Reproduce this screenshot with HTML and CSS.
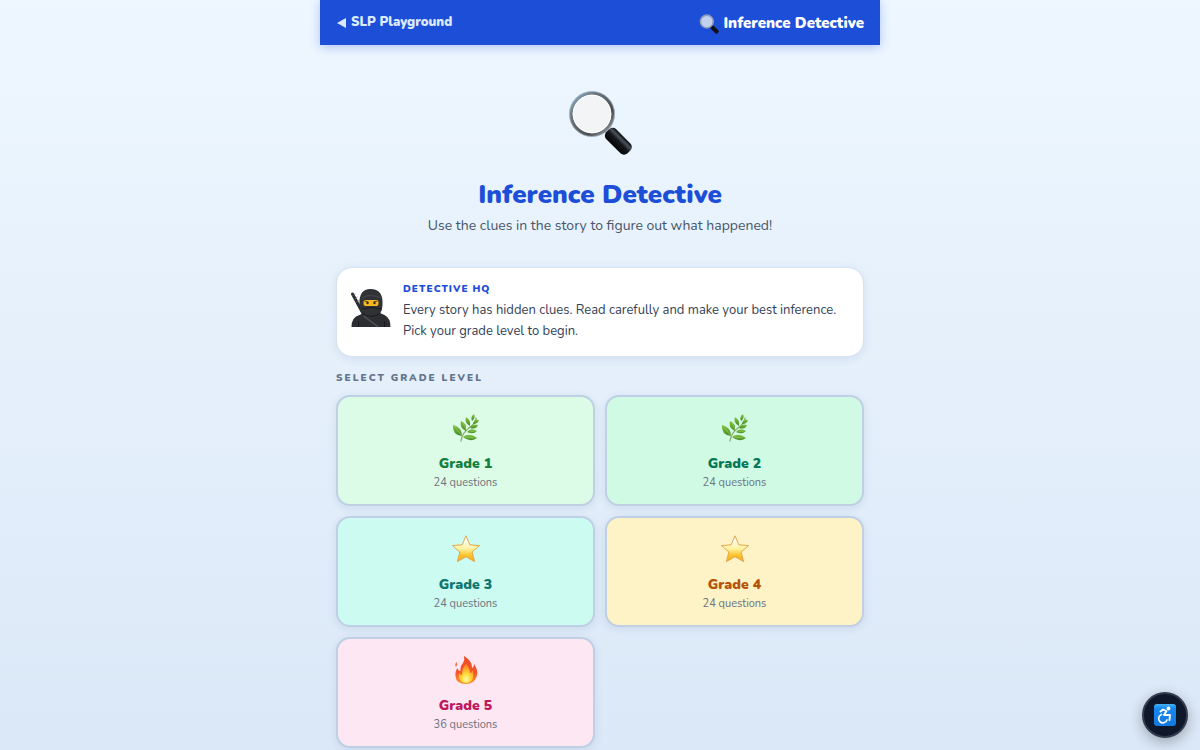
FILE: index.html
```html
<!DOCTYPE html>
<html lang="en">
  <head>
    <meta charset="UTF-8" />
    <meta name="viewport" content="width=device-width, initial-scale=1.0" />
    <title>Inference Detective</title>
    <link rel="stylesheet" href="styles.css">
  </head>
  <body>
    <!-- shared icons -->
    <svg class="sprite" aria-hidden="true">
      <defs>
        <linearGradient id="rim" x1="0" y1="0" x2="1" y2="1">
          <stop offset="0" stop-color="#8fb4cc" />
          <stop offset="0.3" stop-color="#6d757c" />
          <stop offset="0.7" stop-color="#4a4e52" />
          <stop offset="1" stop-color="#a9adb1" />
        </linearGradient>
        <linearGradient id="handle" x1="0" y1="1" x2="0" y2="0">
          <stop offset="0" stop-color="#050607" />
          <stop offset="0.5" stop-color="#15181b" />
          <stop offset="0.75" stop-color="#4a525a" />
          <stop offset="1" stop-color="#08090a" />
        </linearGradient>
        <linearGradient id="leaf" x1="0" y1="0" x2="0" y2="1">
          <stop offset="0" stop-color="#86c440" />
          <stop offset="1" stop-color="#438a28" />
        </linearGradient>
        <linearGradient id="gold" x1="0" y1="0" x2="0" y2="1">
          <stop offset="0.2" stop-color="#fffdf0" />
          <stop offset="0.5" stop-color="#fff2a0" />
          <stop offset="0.75" stop-color="#fdc52e" />
          <stop offset="1" stop-color="#f5a51c" />
        </linearGradient>
        <linearGradient id="flame" x1="0" y1="0" x2="0" y2="1">
          <stop offset="0" stop-color="#ee4a25" />
          <stop offset="0.6" stop-color="#f4562a" />
          <stop offset="1" stop-color="#fb9b28" />
        </linearGradient>
        <radialGradient id="glow" cx="0.5" cy="0.8" r="0.7">
          <stop offset="0" stop-color="#fffbb0" />
          <stop offset="0.4" stop-color="#ffdc3a" />
          <stop offset="1" stop-color="#fb8b24" />
        </radialGradient>
        <linearGradient id="tile" x1="0" y1="0" x2="0" y2="1">
          <stop offset="0" stop-color="#45b3f7" />
          <stop offset="0.2" stop-color="#1688ee" />
          <stop offset="1" stop-color="#1479e0" />
        </linearGradient>
      </defs>
      <symbol id="magnifier" viewBox="0 0 64 64">
        <path d="M36 37l5 5" stroke="#7c8186" stroke-width="5" />
        <rect x="-14.500" y="-7" width="30" height="14" rx="5" transform="translate(50 50) rotate(45)" fill="url(#handle)" />
        <circle cx="24" cy="23" r="21" fill="#f3f4f6" stroke="url(#rim)" stroke-width="3.500" />
        <circle cx="24" cy="23" r="22.500" fill="none" stroke="#a8c0d0" stroke-width="0.700" />
        <circle cx="24" cy="23" r="18.800" fill="none" stroke="#fff" stroke-width="1" />
      </symbol>
      <symbol id="magnifier-small" viewBox="0 0 64 64">
        <path d="M36 37l5 5" stroke="#8c9196" stroke-width="5" />
        <rect x="-14.500" y="-6.500" width="29" height="13" rx="4" transform="translate(50 50) rotate(45)" fill="#0d1117" />
        <circle cx="25" cy="24" r="20.500" fill="#c3d0f0" stroke="#8d9cb8" stroke-width="5" />
      </symbol>
      <symbol id="herb" viewBox="0 0 28 28">
        <path d="M9 27Q10 19 17 14T24 4" fill="none" stroke="#8dab6e" stroke-width="1.300" stroke-linecap="round" />
        <g fill="url(#leaf)">
          <path d="M10 22Q0 21 1 11Q10 13 10 22z" />
          <path d="M14 17Q7 14 9 7Q15 9 14 17z" />
          <path d="M18 12Q12 9 14 3Q19 6 18 12z" />
          <path d="M20 7Q18 3 22 0Q24 4 20 7z" />
          <path d="M21 10Q22 4 27 6Q26 10 21 10z" />
          <path d="M18 14Q20 9 26 11Q24 16 18 14z" />
          <path d="M15 18Q19 13 25 17Q21 21 15 18z" />
          <path d="M11 23Q17 18 25 24Q18 29 11 23z" />
        </g>
        <path d="M3 13L10 22M11 9L14 16M13 23L22 24M17 18L23 17" fill="none" stroke="#a5d46b" stroke-width="0.500" />
      </symbol>
      <symbol id="star" viewBox="0 0 28 28">
        <path d="M14 0.800L17.800 9.800L27.500 10.600L20.100 17L22.600 26.600L14 21.700L5.400 26.600L7.900 17L0.500 10.600L10.200 9.800z" fill="url(#gold)" stroke="#e2a74a" stroke-width="1" stroke-linejoin="round" />
      </symbol>
      <symbol id="fire" viewBox="0 0 28 28">
        <path d="M12 0C18 4 20 7 20 12Q22 11 22 8Q27 15 24.500 21Q22 28 14 28Q4 28 3.500 20Q3 15 5.500 12Q6 15 8.500 15Q8 10 11 7Q13 4 12 0z" fill="url(#flame)" />
        <path d="M5 6Q2 8 4 11Q6 9 5 6z" fill="#f27146" />
        <path d="M14 8Q18 12 18 17Q20 17 20.500 14Q24 26 14 27Q5 26 7 17Q8 19 10 19Q10 12 14 8z" fill="url(#glow)" />
      </symbol>
    </svg>

    <div class="app">
      <header class="topbar">
        <a href="#" class="back-link">
          <svg class="back-arrow" viewBox="0 0 10 10" aria-hidden="true"><path d="M10 0v10L1 5z" fill="currentColor" /></svg>
          SLP Playground
        </a>
        <div class="topbar-title">
          <svg class="title-icon" aria-hidden="true"><use href="#magnifier-small" /></svg>
          Inference Detective
        </div>
      </header>

      <main>
        <section class="hero">
          <svg class="hero-icon" aria-hidden="true"><use href="#magnifier" /></svg>
          <h1>Inference Detective</h1>
          <p>Use the clues in the story to figure out what happened!</p>
        </section>

        <section class="hq-card">
          <svg class="ninja" viewBox="0 0 40 40" aria-hidden="true">
            <path d="M2 6L15 30" stroke="#292b2f" stroke-width="3" stroke-linecap="round" />
            <path d="M2 8L5 6M4 11L7 9M6 14L9 12" stroke="#76777a" stroke-width="0.700" />
            <path d="M1 39Q1 29 9 27L15 24H27L34 27Q40 30 40 39z" fill="#2c2e31" />
            <path d="M9 17Q8 1 20 1Q33 1 32 17Q32 28 21 31Q10 28 9 17z" fill="#303236" />
            <path d="M11 10Q20 5 30 10" fill="none" stroke="#484a4e" stroke-width="1" />
            <rect x="13" y="12" width="15" height="6" rx="2" fill="#f5b81d" />
            <path d="M14 13l4 1M27 13l-4 1" stroke="#6c4811" stroke-width="1" />
            <circle cx="17" cy="15" r="1.200" fill="#3b2712" />
            <circle cx="24" cy="15" r="1.200" fill="#3b2712" />
            <path d="M11 21Q20 18 31 21M12 25Q20 32 30 25" fill="none" stroke="#1a1b1e" stroke-width="1" />
            <path d="M13 28L28 39" fill="none" stroke="#55575b" stroke-width="1.200" />
            <path d="M8 33v6M34 33v6" stroke="#17181a" stroke-width="1" />
          </svg>
          <div>
            <h2>Detective HQ</h2>
            <p>Every story has hidden clues. Read carefully and make your best inference. Pick your grade level to begin.</p>
          </div>
        </section>

        <h3 class="section-label">Select Grade Level</h3>
        <div class="grade-grid">
          <button class="grade-card grade-1">
            <svg class="grade-icon" aria-hidden="true"><use href="#herb" /></svg>
            <span class="grade-name">Grade 1</span>
            <span class="grade-count">24 questions</span>
          </button>
          <button class="grade-card grade-2">
            <svg class="grade-icon" aria-hidden="true"><use href="#herb" /></svg>
            <span class="grade-name">Grade 2</span>
            <span class="grade-count">24 questions</span>
          </button>
          <button class="grade-card grade-3">
            <svg class="grade-icon" aria-hidden="true"><use href="#star" /></svg>
            <span class="grade-name">Grade 3</span>
            <span class="grade-count">24 questions</span>
          </button>
          <button class="grade-card grade-4">
            <svg class="grade-icon" aria-hidden="true"><use href="#star" /></svg>
            <span class="grade-name">Grade 4</span>
            <span class="grade-count">24 questions</span>
          </button>
          <button class="grade-card grade-5">
            <svg class="grade-icon" aria-hidden="true"><use href="#fire" /></svg>
            <span class="grade-name">Grade 5</span>
            <span class="grade-count">36 questions</span>
          </button>
        </div>
      </main>
    </div>

    <button class="a11y-button" aria-label="Accessibility options">
      <svg viewBox="0 0 24 24" aria-hidden="true">
        <rect x="1" y="1" width="22" height="22" rx="3" fill="url(#tile)" />
        <circle cx="15.500" cy="5.500" r="1.900" fill="#fff" />
        <path d="M7.500 8.500L10 6.500L13.500 8L11 12H17L16.500 17" fill="none" stroke="#fff" stroke-width="1.900" stroke-linejoin="round" stroke-linecap="round" />
        <path d="M8.500 11.500A4.300 4.300 0 1 0 14 17" fill="none" stroke="#fff" stroke-width="1.700" stroke-linecap="round" />
      </svg>
    </button>
  </body>
</html>
```
FILE: styles.css
```css
* {
  box-sizing: border-box;
  margin: 0;
  padding: 0;
}
body {
  min-height: 100vh;
  font-family: Nunito, Lato, sans-serif;
  color: #334155;
  background: linear-gradient(180deg, #eef7ff 0%, #dbe8f7 100%);
}
.sprite {
  position: absolute;
  width: 0;
  height: 0;
}
.app {
  max-width: 560px;
  margin: 0 auto;
}

/* Top bar */
.topbar {
  display: flex;
  align-items: center;
  justify-content: space-between;
  padding: 11px 16px;
  line-height: 21px;
  color: #fff;
  background: #1d4ed8;
  box-shadow: 0 2px 10px rgba(29, 78, 216, 0.3);
}
.back-link {
  display: flex;
  align-items: center;
  gap: 5px;
  font-size: 13px;
  font-weight: 900;
  color: #dbeafe;
  text-decoration: none;
}
.back-arrow {
  width: 10px;
  height: 10px;
}
.topbar-title {
  display: flex;
  align-items: center;
  gap: 4px;
  padding-top: 2px;
  font-size: 15px;
  font-weight: 900;
}
.title-icon {
  width: 20px;
  height: 20px;
}

/* Intro */
main {
  padding: 45px 16px 3px;
}
.hero {
  text-align: center;
  margin-bottom: 30px;
}
.hero-icon {
  display: block;
  width: 64px;
  height: 66px;
  margin: 0 auto 20px;
}
.hero h1 {
  margin-bottom: 1px;
  font-size: 26px;
  line-height: 38px;
  font-weight: 900;
  color: #1d4ed8;
}
.hero p {
  font-size: 14px;
  line-height: 22px;
  color: #475569;
}
.hq-card {
  display: flex;
  align-items: flex-start;
  gap: 12px;
  padding: 13px;
  margin-bottom: 13px;
  background: #fff;
  border: 1px solid #d8e3f1;
  border-radius: 16px;
  box-shadow: 0 2px 10px rgba(30, 64, 120, 0.1);
}
.ninja {
  flex: none;
  width: 41px;
  height: 40px;
  margin-top: 7px;
}
.hq-card h2 {
  font-size: 10px;
  line-height: 16px;
  font-weight: 900;
  letter-spacing: 1px;
  text-transform: uppercase;
  color: #1d4ed8;
}
.hq-card p {
  padding: 3px 0 1px;
  font-size: 13px;
  line-height: 21px;
}
.section-label {
  margin-bottom: 8px;
  font-size: 10px;
  line-height: 17px;
  font-weight: 900;
  letter-spacing: 2px;
  text-transform: uppercase;
  color: #64748b;
}

/* Grade cards */
.grade-grid {
  display: grid;
  grid-template-columns: 1fr 1fr;
  gap: 10px;
}
.grade-card {
  display: flex;
  flex-direction: column;
  align-items: center;
  padding: 17px 12px 12px;
  font-family: inherit;
  border: 2px solid #bfd0e4;
  border-radius: 14px;
  box-shadow: 0 2px 8px rgba(30, 64, 120, 0.1);
  cursor: pointer;
}
.grade-icon {
  width: 28px;
  height: 28px;
  margin-bottom: 13px;
}
.grade-name {
  font-size: 14px;
  line-height: 18px;
  font-weight: 900;
}
.grade-count {
  font-size: 11px;
  line-height: 19px;
  color: #6b7280;
}
.grade-1 {
  background: #dcfce7;
  color: #15803d;
}
.grade-2 {
  background: #d1fae5;
  color: #047857;
}
.grade-3 {
  background: #ccfbf1;
  color: #0f766e;
}
.grade-4 {
  background: #fef3c7;
  color: #b45309;
}
.grade-5 {
  background: #fce7f3;
  color: #be185d;
}

.a11y-button {
  position: fixed;
  right: 12px;
  bottom: 12px;
  display: flex;
  align-items: center;
  justify-content: center;
  width: 46px;
  height: 46px;
  background: #0f172a;
  border: 2px solid #323b50;
  border-radius: 50%;
  box-shadow: 0 4px 14px rgba(0, 0, 0, 0.3);
  cursor: pointer;
}
.a11y-button svg {
  flex: none;
  width: 24px;
  height: 24px;
}
```
